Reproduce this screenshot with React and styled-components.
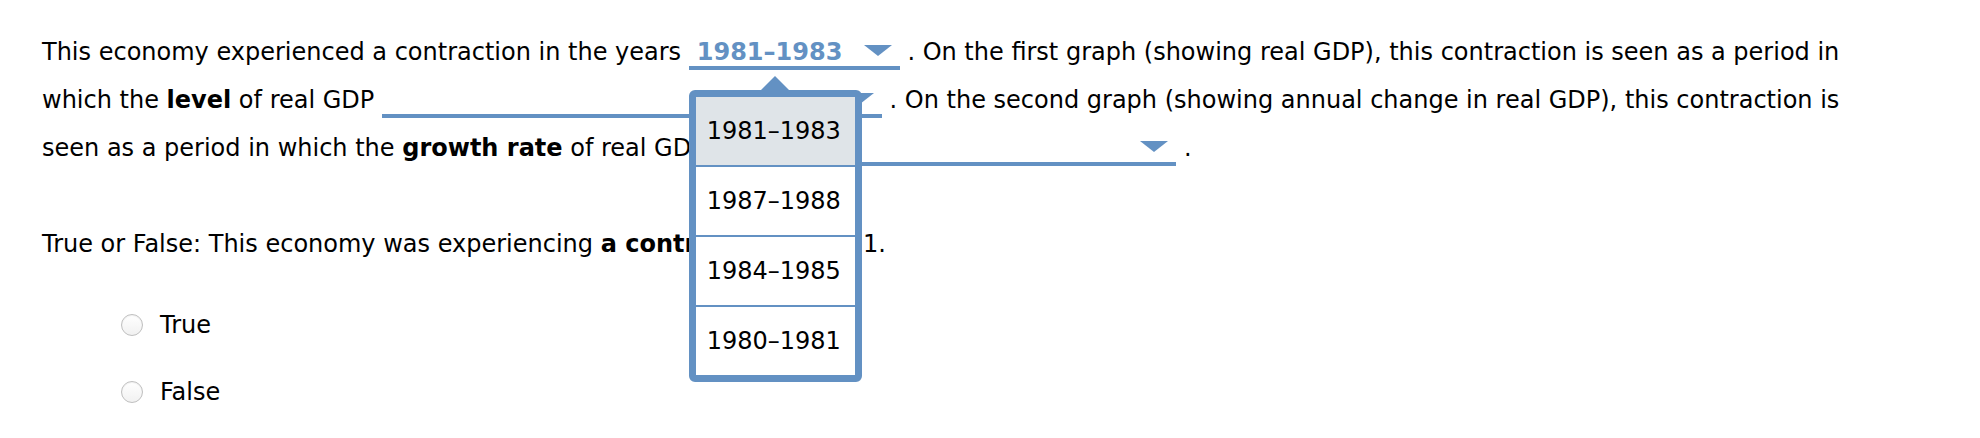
import React from 'react';
import styled, { createGlobalStyle } from 'styled-components';

const blue = '#6391c3';

const GlobalStyle = createGlobalStyle`
  html, body {
    margin: 0;
    padding: 0;
    background: #fff;
  }
  body {
    font-family: "DejaVu Sans", Verdana, sans-serif;
    font-size: 24px;
    color: #000;
  }
`;

const Page = styled.div`
  padding: 28px 98px 0 42px;
`;

const Question = styled.p`
  margin: 0;
  line-height: 48px;

  & + & {
    margin-top: 48px;
  }
`;

const SelectWrap = styled.span`
  position: relative;
  display: inline-block;
  line-height: 28px;
`;

const Select = styled.span`
  display: inline-flex;
  justify-content: space-between;
  align-items: flex-start;
  box-sizing: border-box;
  width: ${({ $width }) => $width}px;
  padding: 0 8px;
  border-bottom: 4px solid ${blue};
  line-height: 28px;
  vertical-align: baseline;
  cursor: pointer;
`;

const Value = styled.span`
  font-weight: 700;
  color: ${blue};
  white-space: nowrap;
`;

const Arrow = styled.svg`
  flex: none;
  width: 28px;
  height: 11px;
  margin-top: 7px;
`;

const Popup = styled.ul`
  position: absolute;
  left: 0;
  top: calc(100% + 20px);
  z-index: 10;
  box-sizing: border-box;
  width: 173px;
  margin: 0;
  padding: 0;
  list-style: none;
  background: #fff;
  border: 7px solid ${blue};
  border-radius: 6px;
  line-height: 68px;

  &::before {
    content: '';
    position: absolute;
    left: 50%;
    top: -21px;
    margin-left: -14px;
    border-left: 14px solid transparent;
    border-right: 14px solid transparent;
    border-bottom: 14px solid ${blue};
  }
`;

const Option = styled.li`
  height: 68px;
  padding-left: 11px;
  color: #000;
  white-space: nowrap;
  background: ${({ $selected }) => ($selected ? '#dfe4e8' : '#fff')};

  & + & {
    border-top: 2px solid ${blue};
  }
`;

const Choices = styled.div`
  display: flex;
  flex-direction: column;
  gap: 19px;
  margin-top: 33px;
  padding-left: 79px;
`;

const Choice = styled.label`
  display: flex;
  align-items: center;
  gap: 17px;
  height: 48px;
  line-height: 48px;
`;

const Radio = styled.span`
  box-sizing: border-box;
  width: 22px;
  height: 22px;
  border-radius: 50%;
  border: 1px solid #bfbfbf;
  background: linear-gradient(#ffffff, #f1f1f1);
  box-shadow: inset 0 1px 1px rgba(0, 0, 0, 0.06);
`;

const DownArrow = () => (
  <Arrow viewBox="0 0 28 11">
    <polygon points="0,0 28,0 14,11" fill={blue} />
  </Arrow>
);

const Dropdown = ({ width, value }) => (
  <Select $width={width}>
    <Value>{value || '\u00a0'}</Value>
    <DownArrow />
  </Select>
);

const years = ['1981–1983', '1987–1988', '1984–1985', '1980–1981'];

export default function App() {
  return (
    <>
      <GlobalStyle />
      <Page>
        <Question>
          This economy experienced a contraction in the years{' '}
          <SelectWrap>
            <Dropdown width={211} value="1981–1983" />
            <Popup>
              {years.map((y, i) => (
                <Option key={y} $selected={i === 0}>
                  {y}
                </Option>
              ))}
            </Popup>
          </SelectWrap>{' '}
          . On the first graph (showing real GDP), this contraction is seen as a period in which the{' '}
          <b>level</b> of real GDP <Dropdown width={500} /> . On the second graph (showing annual
          change in real GDP), this contraction is seen as a period in which the <b>growth rate</b> of
          real GDP <Dropdown width={463} /> .
        </Question>
        <Question>
          True or False: This economy was experiencing <b>a contraction</b> in 1981.
        </Question>
        <Choices>
          <Choice>
            <Radio />
            True
          </Choice>
          <Choice>
            <Radio />
            False
          </Choice>
        </Choices>
      </Page>
    </>
  );
}
